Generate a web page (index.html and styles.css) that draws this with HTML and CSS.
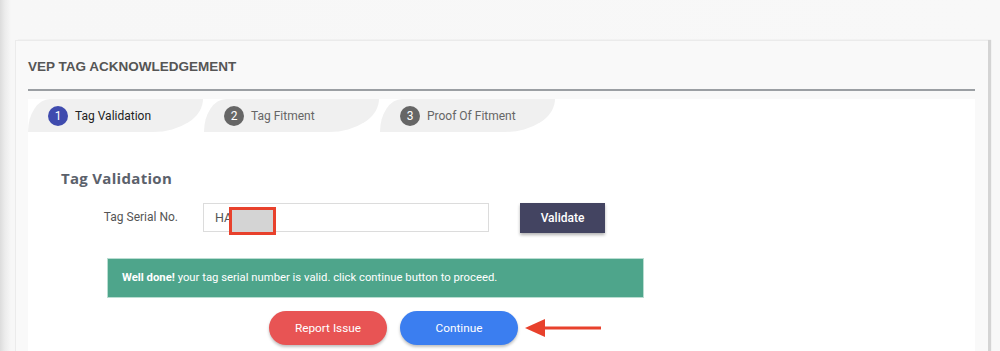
FILE: index.html
```html
<!DOCTYPE html>
<html lang="en">
<head>
    <meta charset="UTF-8">
    <meta name="viewport" content="width=device-width, initial-scale=1.0">
    <title>VEP Tag Acknowledgement</title>
    <link rel="stylesheet" href="styles.css">
</head>
<body>
    <div class="card">
        <h1 class="card-title">VEP TAG ACKNOWLEDGEMENT</h1>

        <div class="panel">
            <div class="tabs">
                <div class="tab active"><span class="step">1</span>Tag Validation</div>
                <div class="tab"><span class="step">2</span>Tag Fitment</div>
                <div class="tab"><span class="step">3</span>Proof Of Fitment</div>
            </div>

            <div class="section">
                <h2>Tag Validation</h2>

                <div class="form-row">
                    <label for="serial">Tag Serial No.</label>
                    <div class="field">
                        <input type="text" id="serial" value="HA">
                        <span class="mask"></span>
                    </div>
                    <button class="btn-validate">Validate</button>
                </div>

                <div class="alert"><b>Well done!</b> your tag serial number is valid. click continue button to proceed.</div>

                <div class="actions">
                    <button class="btn-round btn-report">Report Issue</button>
                    <button class="btn-round btn-continue">Continue</button>
                    <svg class="arrow" width="80" height="24" viewBox="0 0 80 24">
                        <path d="M2 12 L22 3 L22 21 Z" fill="#e8412c"/>
                        <rect x="20" y="10.5" width="58" height="3" fill="#e8412c"/>
                    </svg>
                </div>
            </div>
        </div>
    </div>
</body>
</html>
```

FILE: styles.css
```css
body {
    margin: 0;
    padding: 0;
    height: 351px;
    overflow: hidden;
    font-family: Roboto, "Liberation Sans", sans-serif;
    background: linear-gradient(to right, #dcdcdc 0, #ececec 5px, #f7f7f7 11px, #f8f8f8 100%);
}
.card {
    margin: 40px 0 0 15px;
    width: 947px;
    padding: 0 13px 0 12px;
    height: 320px;
    background: #f9f9f9;
    border-top: 1px solid #ebebeb;
    border-left: 1px solid #ebebeb;
    box-shadow: 3px 0 1px #d4d4d4;
}
.card-title {
    margin: 0;
    padding-top: 16px;
    padding-bottom: 12px;
    font-family: "Liberation Sans", Arial, sans-serif;
    font-size: 13.5px;
    line-height: 20px;
    font-weight: bold;
    color: #555;
    border-bottom: 2px solid #9b9fa3;
}
.panel {
    margin-top: 8px;
    background: #fff;
    height: 260px;
}
.tabs {
    display: flex;
    gap: 1px;
}
.tab {
    display: flex;
    align-items: center;
    width: 155px;
    height: 33px;
    padding-left: 20px;
    background: #f0f0f0;
    border-radius: 22px 0 50px 0 / 33px 0 33px 0;
    font-size: 12px;
    color: #666;
}
.tab.active {
    color: #222;
}
.step {
    display: inline-flex;
    align-items: center;
    justify-content: center;
    width: 20px;
    height: 20px;
    margin-right: 7px;
    border-radius: 50%;
    background: #666;
    color: #fff;
    font-size: 12px;
}
.tab.active .step {
    background: #3f4bae;
}
.section {
    padding: 0 33px;
}
.section h2 {
    margin: 36px 0 0;
    font-family: "Open Sans", sans-serif;
    font-size: 15px;
    line-height: 20px;
    font-weight: 700;
    letter-spacing: 0.3px;
    color: #5b616b;
}
.form-row {
    display: flex;
    align-items: flex-start;
    margin-top: 15px;
}
.form-row label {
    width: 117px;
    margin-right: 25px;
    text-align: right;
    font-size: 12px;
    line-height: 28px;
    color: #555;
}
.field {
    position: relative;
}
.field input {
    box-sizing: border-box;
    width: 286px;
    height: 29px;
    padding: 0 11px;
    border: 1px solid #dcdcdc;
    font-family: Roboto, sans-serif;
    font-size: 12.5px;
    color: #555;
}
.mask {
    position: absolute;
    left: 26px;
    top: 4px;
    width: 41px;
    height: 22px;
    background: #d4d4d4;
    border: 3.5px solid #e8412c;
}
.btn-validate {
    width: 85px;
    height: 30px;
    margin-left: 31px;
    border: none;
    background: #434461;
    color: #fff;
    font-family: Roboto, sans-serif;
    font-size: 12px;
    font-weight: 500;
    box-shadow: 0 2px 3px rgba(0, 0, 0, 0.3);
}
.alert {
    box-sizing: border-box;
    width: 537px;
    height: 40px;
    margin: 25px 0 0 46px;
    padding: 0 14px;
    background: #4ea58b;
    border: 1px solid #b9ddd1;
    color: #fff;
    font-size: 11.3px;
    line-height: 38px;
}
.actions {
    display: flex;
    align-items: center;
    gap: 13px;
    margin: 13px 0 0 208px;
}
.btn-round {
    width: 118px;
    height: 34px;
    border: none;
    border-radius: 17px;
    color: #fff;
    font-family: Roboto, sans-serif;
    font-size: 11.8px;
    box-shadow: 0 2px 3px rgba(0, 0, 0, 0.25);
}
.btn-report {
    background: #e85454;
}
.btn-continue {
    background: #3b7ef0;
}
.arrow {
    margin-left: -8px;
}
```
